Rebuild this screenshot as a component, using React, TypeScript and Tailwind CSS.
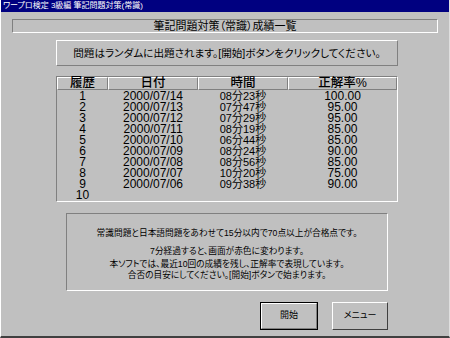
const rows = [
  { no: "1", date: "2000/07/14", time: "08分23秒", rate: "100.00" },
  { no: "2", date: "2000/07/13", time: "07分47秒", rate: "95.00" },
  { no: "3", date: "2000/07/12", time: "07分29秒", rate: "95.00" },
  { no: "4", date: "2000/07/11", time: "08分19秒", rate: "85.00" },
  { no: "5", date: "2000/07/10", time: "06分44秒", rate: "85.00" },
  { no: "6", date: "2000/07/09", time: "08分24秒", rate: "90.00" },
  { no: "7", date: "2000/07/08", time: "08分56秒", rate: "85.00" },
  { no: "8", date: "2000/07/07", time: "10分20秒", rate: "75.00" },
  { no: "9", date: "2000/07/06", time: "09分38秒", rate: "90.00" },
  { no: "10", date: "", time: "", rate: "" },
];

const jp = "font-['Liberation_Sans','Noto_Sans_CJK_JP',sans-serif] [font-feature-settings:'palt']";
const cols = "grid grid-cols-[51px_90px_90px_1fr]";

const HeaderCell = ({ label }: { label: string }) => (
  <div className="h-[13px] border-t border-l border-t-white border-l-white border-r border-b border-r-[#808080] border-b-[#808080] flex items-center justify-center text-[12.5px] font-medium leading-none">
    {label}
  </div>
);

export default function App() {
  return (
    <div className={`w-[450px] h-[338px] bg-[#c0c0c0] text-black flex flex-col border-l border-l-white border-r border-r-[#dfdfdf] border-b-2 border-b-[#404040] ${jp}`}>
      {/* title bar */}
      <div className="h-[12px] bg-[#000080] text-white text-[8px] leading-[12px] pl-[2px] whitespace-nowrap">
        ワープロ検定 3級編 筆記問題対策(常識)
      </div>

      {/* heading */}
      <div className="mt-[7px] mx-[11px] h-[14px] border border-t-[#808080] border-l-[#808080] border-b-white border-r-white flex items-center justify-center text-[11px] leading-none">
        筆記問題対策（常識）成績一覧
      </div>

      {/* instruction */}
      <div className="mt-[7px] ml-[55px] w-[342px] h-[26px] border border-t-white border-l-white border-b-[#808080] border-r-[#808080] flex items-center justify-center text-[10.6px] leading-none whitespace-nowrap">
        問題はランダムに出題されます。[開始]ボタンをクリックしてください。
      </div>

      {/* table */}
      <div className="mt-[10px] ml-[55px] w-[342px] h-[126px] border border-t-[#808080] border-l-[#808080] border-b-white border-r-white flex flex-col">
        <div className={cols}>
          <HeaderCell label="履歴" />
          <HeaderCell label="日付" />
          <HeaderCell label="時間" />
          <HeaderCell label="正解率%" />
        </div>
        <div className="pt-[1px]">
          {rows.map((r) => (
            <div key={r.no} className={`${cols} h-[11px] items-center text-[12px] leading-[11px]`}>
              <div className="text-center">{r.no}</div>
              <div className="text-center">{r.date}</div>
              <div className="text-center text-[11px]">{r.time}</div>
              <div className="text-center">{r.rate}</div>
            </div>
          ))}
        </div>
      </div>

      {/* notice */}
      <div className="mt-[11px] ml-[65px] w-[322px] h-[78px] border border-t-[#808080] border-l-[#808080] border-b-white border-r-white flex flex-col items-center text-[8.7px] pt-[13px] whitespace-nowrap">
        <div className="leading-[12px]">常識問題と日本語問題をあわせて15分以内で70点以上が合格点です。</div>
        <div className="leading-[12px] mt-[6px]">7分経過すると、画面が赤色に変わります。</div>
        <div className="leading-[11px] mt-[2px]">本ソフトでは、最近10回の成績を残し、正解率で表現しています。</div>
        <div className="leading-[11px]">合否の目安にしてください。[開始]ボタンで始まります。</div>
      </div>

      {/* buttons */}
      <div className="mt-[11px] flex pl-[259px] gap-[14px]">
        <button className="w-[58px] h-[28px] border border-black bg-[#c0c0c0] p-0">
          <div className="w-full h-full border border-t-white border-l-white border-b-[#808080] border-r-[#808080] flex items-center justify-center text-[9px]">
            開始
          </div>
        </button>
        <button className="w-[56px] h-[28px] border border-t-white border-l-white border-b-[#404040] border-r-[#404040] bg-[#c0c0c0] flex items-center justify-center text-[9px]">
          メニュー
        </button>
      </div>
    </div>
  );
}
